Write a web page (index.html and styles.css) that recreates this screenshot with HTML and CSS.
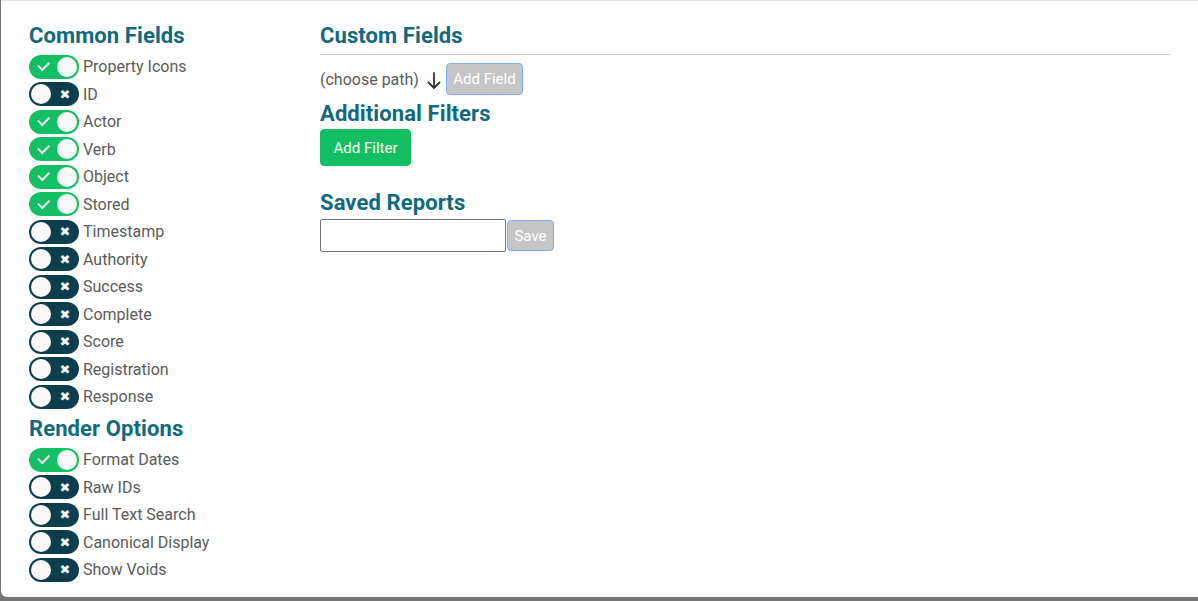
FILE: index.html
```html
<!DOCTYPE html>
<html>
<head>
<meta charset="utf-8">
<link rel="stylesheet" href="styles.css">
</head>
<body>
<div class="panel">
  <div class="col-left">
    <h2 class="heading">Common Fields</h2>
    <ul class="toggles">
      <li class="row"><span class="toggle on"><span class="mark check"></span><span class="knob"></span></span>Property Icons</li>
      <li class="row"><span class="toggle off"><span class="knob"></span><span class="mark cross">✖</span></span>ID</li>
      <li class="row"><span class="toggle on"><span class="mark check"></span><span class="knob"></span></span>Actor</li>
      <li class="row"><span class="toggle on"><span class="mark check"></span><span class="knob"></span></span>Verb</li>
      <li class="row"><span class="toggle on"><span class="mark check"></span><span class="knob"></span></span>Object</li>
      <li class="row"><span class="toggle on"><span class="mark check"></span><span class="knob"></span></span>Stored</li>
      <li class="row"><span class="toggle off"><span class="knob"></span><span class="mark cross">✖</span></span>Timestamp</li>
      <li class="row"><span class="toggle off"><span class="knob"></span><span class="mark cross">✖</span></span>Authority</li>
      <li class="row"><span class="toggle off"><span class="knob"></span><span class="mark cross">✖</span></span>Success</li>
      <li class="row"><span class="toggle off"><span class="knob"></span><span class="mark cross">✖</span></span>Complete</li>
      <li class="row"><span class="toggle off"><span class="knob"></span><span class="mark cross">✖</span></span>Score</li>
      <li class="row"><span class="toggle off"><span class="knob"></span><span class="mark cross">✖</span></span>Registration</li>
      <li class="row"><span class="toggle off"><span class="knob"></span><span class="mark cross">✖</span></span>Response</li>
    </ul>
    <h2 class="heading heading-gap">Render Options</h2>
    <ul class="toggles">
      <li class="row"><span class="toggle on"><span class="mark check"></span><span class="knob"></span></span>Format Dates</li>
      <li class="row"><span class="toggle off"><span class="knob"></span><span class="mark cross">✖</span></span>Raw IDs</li>
      <li class="row"><span class="toggle off"><span class="knob"></span><span class="mark cross">✖</span></span>Full Text Search</li>
      <li class="row"><span class="toggle off"><span class="knob"></span><span class="mark cross">✖</span></span>Canonical Display</li>
      <li class="row"><span class="toggle off"><span class="knob"></span><span class="mark cross">✖</span></span>Show Voids</li>
    </ul>
  </div>
  <div class="col-right">
    <h2 class="heading">Custom Fields</h2>
    <hr class="rule">
    <div class="path-row">
      <span class="path-text">(choose path)</span>
      <svg class="arrow" width="16" height="20" viewBox="0 0 16 20"><path d="M8 2 V17 M2.5 11.5 L8 17 L13.5 11.5" fill="none" stroke="#333" stroke-width="1.8" stroke-linecap="round" stroke-linejoin="round"/></svg>
      <button class="btn btn-disabled btn-field">Add Field</button>
    </div>
    <h2 class="heading heading-filters">Additional Filters</h2>
    <button class="btn btn-green">Add Filter</button>
    <h2 class="heading heading-saved">Saved Reports</h2>
    <div class="save-row">
      <input class="name-input" type="text">
      <button class="btn btn-disabled btn-save">Save</button>
    </div>
  </div>
</div>
</body>
</html>
```

FILE: styles.css
```css
html, body {
  margin: 0;
  padding: 0;
}
body {
  background: #757575;
  width: 1198px;
  height: 601px;
  overflow: hidden;
  font-family: Roboto, "Noto Sans", sans-serif;
}
.panel {
  box-sizing: border-box;
  margin-left: 1px;
  width: 1197px;
  height: 597px;
  background: #fff;
  border-top: 1px solid #dde0e4;
  border-bottom-left-radius: 6px;
  padding: 20px 28px 0 28px;
  display: flex;
  gap: 20px;
}
.col-left {
  width: 271px;
  flex: none;
}
.col-right {
  flex: 1;
  display: flex;
  flex-direction: column;
  align-items: flex-start;
}
.heading {
  margin: 0;
  height: 30px;
  line-height: 30px;
  font-size: 22px;
  font-weight: 700;
  color: #0f6a7d;
  letter-spacing: 0.1px;
  white-space: nowrap;
}
.heading-gap {
  margin-top: 3.5px;
  margin-bottom: 2px;
}
.toggles {
  list-style: none;
  margin: 1.75px 0 0 0;
  padding: 0;
}
.heading-gap + .toggles {
  margin-top: 0;
}
.row {
  height: 27.5px;
  display: flex;
  align-items: center;
  gap: 4px;
  font-size: 16px;
  color: #5a5a5a;
  white-space: nowrap;
}
.toggle {
  box-sizing: border-box;
  width: 50px;
  height: 24px;
  border-radius: 12px;
  padding: 2px;
  display: flex;
  align-items: center;
  justify-content: space-between;
  flex: none;
}
.toggle.on {
  background: #12bf62;
}
.toggle.off {
  background: #0d3e4e;
}
.knob {
  width: 20px;
  height: 20px;
  border-radius: 50%;
  background: #f8f8f8;
}
.mark {
  width: 24px;
  display: flex;
  align-items: center;
  justify-content: center;
  color: #fff;
}
.check::before {
  content: "";
  width: 9px;
  height: 4.5px;
  border-left: 2.5px solid #fff;
  border-bottom: 2.5px solid #fff;
  transform: translate(0, -1.5px) rotate(-45deg);
}
.cross {
  font-size: 13px;
  font-family: "DejaVu Sans", sans-serif;
  line-height: 1;
}
.rule {
  align-self: stretch;
  margin: 3px 0 0 0;
  border: 0;
  border-top: 1px solid #cfcfcf;
  height: 0;
}
.path-row {
  margin-top: 8px;
  height: 32px;
  display: flex;
  align-items: center;
}
.path-text {
  font-size: 16px;
  color: #5a5a5a;
  padding-top: 1px;
}
.arrow {
  margin: 3px 4px 0 7px;
}
.btn {
  font-family: Roboto, "Noto Sans", sans-serif;
  font-size: 15px;
  color: #fff;
  border-radius: 4px;
  cursor: default;
}
.btn-disabled {
  background: #c6c6c6;
  border: 1px solid #7eaef5;
}
.btn-field {
  width: 77px;
  height: 32px;
  padding: 0;
}
.heading-filters {
  margin-top: 4px;
}
.btn-green {
  box-sizing: border-box;
  width: 91px;
  height: 37px;
  padding: 0;
  margin-top: 0;
  background: #13bf62;
  border: 1px solid #13bf62;
}
.heading-saved {
  margin-top: 22px;
}
.save-row {
  margin-top: 1px;
  display: flex;
  align-items: center;
  gap: 1px;
}
.name-input {
  box-sizing: border-box;
  width: 186px;
  height: 33px;
  border: 1px solid #767676;
  border-radius: 2px;
  margin: 0;
}
.btn-save {
  width: 47px;
  height: 31px;
  padding: 0;
}
```
